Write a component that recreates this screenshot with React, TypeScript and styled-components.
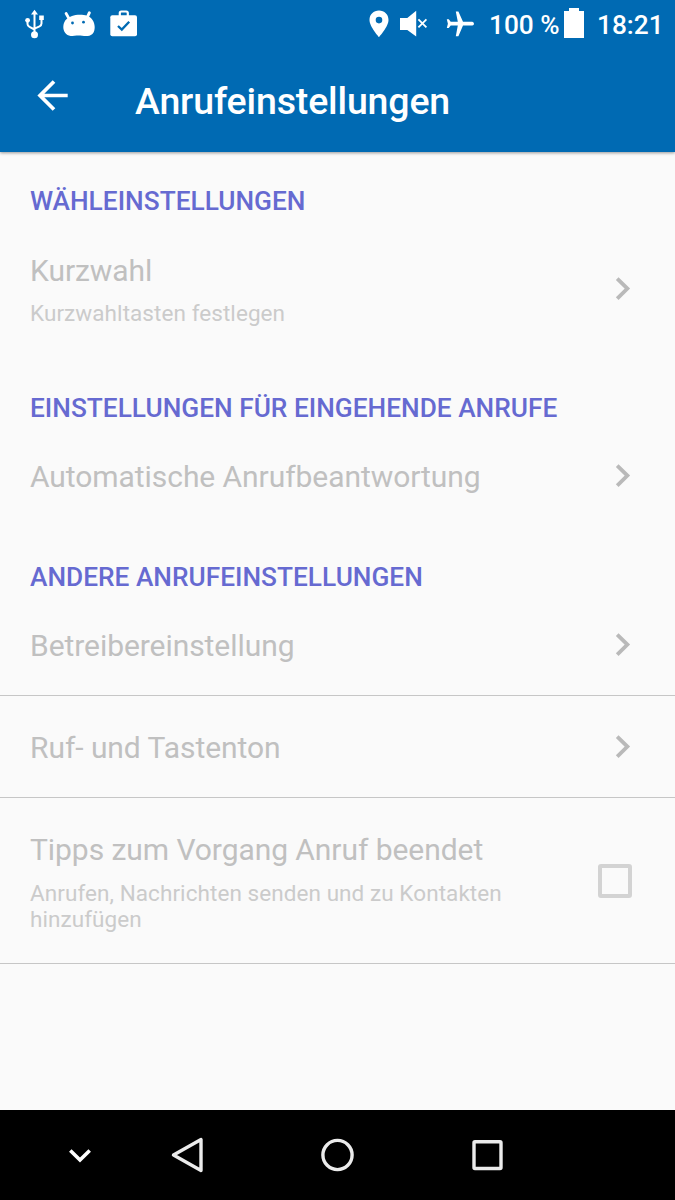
import React from "react";
import styled, { createGlobalStyle } from "styled-components";

const GlobalStyle = createGlobalStyle`
  * { box-sizing: border-box; }
  body { margin: 0; background: #fafafa; font-family: Roboto, "Liberation Sans", sans-serif; }
`;

const Screen = styled.div`
  width: 675px;
  height: 1200px;
  display: flex;
  flex-direction: column;
  background: #fafafa;
  overflow: hidden;
`;

const Header = styled.header`
  flex: none;
  height: 152px;
  background: #006ab3;
  color: #fff;
  box-shadow: 0 1px 3px rgba(0, 0, 0, 0.4);
`;

const StatusBar = styled.div`
  display: flex;
  justify-content: space-between;
  height: 45px;
  padding: 2px 12px 0 22px;
`;

const StatusGroup = styled.div`
  display: flex;
  align-items: center;
`;

const StatusItem = styled.div<{ $gap?: number; $raise?: number }>`
  flex: none;
  margin-left: ${(p) => p.$gap ?? 0}px;
  margin-bottom: ${(p) => p.$raise ?? 0}px;
`;

const StatusText = styled.span<{ $width: number; $gap: number }>`
  width: ${(p) => p.$width}px;
  margin-left: ${(p) => p.$gap}px;
  padding-top: 3px;
  font-size: 26.25px;
  line-height: 31px;
  font-weight: 500;
  white-space: nowrap;
`;

const Icon = styled.svg`
  display: block;
  flex: none;
`;

const Toolbar = styled.div`
  display: flex;
  height: 107px;
  padding: 34px 0 0 36px;
`;

const Title = styled.h1`
  margin: 0 0 0 65px;
  font-size: 37.5px;
  line-height: 44px;
  font-weight: 500;
  letter-spacing: -0.15px;
  white-space: nowrap;
`;

const Content = styled.main`
  flex: 1;
`;

const Category = styled.h2<{ $top?: number }>`
  margin: 0;
  height: 67px;
  padding: ${(p) => p.$top ?? 35}px 30px 0;
  color: #666ad1;
  font-size: 26.25px;
  line-height: 31px;
  font-weight: 500;
  letter-spacing: 0.01px;
  white-space: nowrap;
`;

const Row = styled.div<{ $height: number; $divided?: boolean }>`
  display: flex;
  align-items: center;
  justify-content: space-between;
  height: ${(p) => p.$height}px;
  padding: 0 43px 0 30px;
  border-bottom: ${(p) => (p.$divided ? "1px solid #c6c6c6" : "0")};
`;

const RowText = styled.div`
  align-self: flex-start;
  width: 500px;
  padding-top: 34px;
`;

const RowTitle = styled.div`
  color: #c0c0c0;
  font-size: 30px;
  line-height: 35px;
  letter-spacing: -0.06px;
  white-space: nowrap;
`;

const Summary = styled.div<{ $gap: number }>`
  margin-top: ${(p) => p.$gap}px;
  color: #cbcbcb;
  font-size: 22.5px;
  line-height: 26px;
  letter-spacing: 0.07px;
`;

const Checkbox = styled.span`
  width: 34px;
  height: 34px;
  border: 4px solid #d3d3d3;
  border-radius: 3px;
`;

const NavBar = styled.nav`
  flex: none;
  display: flex;
  align-items: center;
  height: 90px;
  padding-left: 60px;
  background: #000;
`;

const NavButton = styled.span<{ $gap?: number }>`
  width: 40px;
  height: 40px;
  margin-left: ${(p) => p.$gap ?? 0}px;
`;

const UsbIcon = () => (
  <Icon width="26" height="36" viewBox="0 0 26 36">
    <path
      d="M12.500 8v22M5.500 16v3q0 1.800 2 2.800l5 2.700M19.500 14v4.500q0 1.800-2 2.800l-5 2.300"
      fill="none"
      stroke="#fff"
      strokeWidth="2"
    />
    <path d="M12.500 4.700l3.500 4.800H9zM17.200 10.500h4.600v4.600h-4.600z" fill="#fff" />
    <circle cx="5.600" cy="15.300" r="2.400" fill="#fff" />
    <circle cx="12.500" cy="29.800" r="3.500" fill="#fff" />
  </Icon>
);

const AndroidIcon = () => (
  <Icon width="34" height="26" viewBox="0 0 34 26">
    <path d="M4.200 2.600l2.800 5M27.300 1.800l-2.300 5" stroke="#fff" strokeWidth="2.900" strokeLinecap="round" />
    <path
      d="M10 5C14 3.400 21 3.400 25 4.700 30 6.500 32.700 11 32.700 16c0 5-2 8.500-7 9-4 .4-7-.8-11-.4-4 .7-8 .8-10.500-1.600C1 20 .8 15.500 2 12 3.300 8.500 6 6.300 10 5z"
      fill="#fff"
    />
    <circle cx="10.500" cy="12" r="1.400" fill="#006ab3" />
    <circle cx="21.500" cy="11.200" r="1.400" fill="#006ab3" />
  </Icon>
);

const BriefcaseIcon = () => (
  <Icon width="28" height="28" viewBox="0 0 28 28">
    <path
      d="M9.800 6V3q0-1.500 1.500-1.500h5q1.500 0 1.500 1.500v3"
      fill="none"
      stroke="#fff"
      strokeWidth="2.200"
    />
    <rect x=".3" y="5.300" width="26.700" height="21" rx="2" fill="#fff" />
    <path d="M8 16l3.800 3.600 7.400-7.800" fill="none" stroke="#006ab3" strokeWidth="2.300" />
  </Icon>
);

const PinIcon = () => (
  <Icon width="20" height="28" viewBox="0 0 20 28">
    <path
      fillRule="evenodd"
      d="M10 .6C4.600.6.500 4.600.500 9.900.500 16.600 10 27 10 27s9.500-10.400 9.500-17.100C19.500 4.600 15.400.6 10 .6zm0 6.200a3.300 3.300 0 1 1 0 6.600 3.300 3.300 0 0 1 0-6.600z"
      fill="#fff"
    />
  </Icon>
);

const MuteIcon = () => (
  <Icon width="28" height="28" viewBox="0 0 28 28">
    <path d="M0 8h7.300L16.200.8v25.800L7.300 20H0z" fill="#fff" />
    <path d="M18.400 9.300l8 8M26.400 9.300l-8 8" stroke="#fff" strokeWidth="1.800" />
  </Icon>
);

const PlaneIcon = () => (
  <Icon width="28" height="28" viewBox="0 0 28 28">
    <path
      d="M26.300 11.800h-9.300L12.400 1.500H9.800l2 10.300H4.700L2.800 9.300H.8l1.100 4.400L.8 18.100h2l1.900-2.500h7.100l-2 10.600h2.600L17 15.600h9.300q1.700-.4 1.700-1.900t-1.700-1.900z"
      fill="#fff"
    />
  </Icon>
);

const BatteryIcon = () => (
  <Icon width="20" height="30" viewBox="0 0 20 30">
    <path d="M5 0h10v3h5v27H0V3h5z" fill="#fff" />
  </Icon>
);

const Chevron = () => (
  <Icon width="18" height="26" viewBox="0 0 18 26">
    <path d="M3.200 2.600l10.200 10-10.200 10" fill="none" stroke="#b9b9b9" strokeWidth="3.800" />
  </Icon>
);

export default function App() {
  return (
    <Screen>
      <GlobalStyle />
      <Header>
        <StatusBar>
          <StatusGroup>
            <StatusItem $raise={2}>
              <UsbIcon />
            </StatusItem>
            <StatusItem $gap={14}>
              <AndroidIcon />
            </StatusItem>
            <StatusItem $gap={14}>
              <BriefcaseIcon />
            </StatusItem>
          </StatusGroup>
          <StatusGroup>
            <StatusItem>
              <PinIcon />
            </StatusItem>
            <StatusItem $gap={11}>
              <MuteIcon />
            </StatusItem>
            <StatusItem $gap={18}>
              <PlaneIcon />
            </StatusItem>
            <StatusText $width={75} $gap={15}>100 %</StatusText>
            <StatusItem $raise={2}>
              <BatteryIcon />
            </StatusItem>
            <StatusText $width={66} $gap={13}>18:21</StatusText>
          </StatusGroup>
        </StatusBar>
        <Toolbar>
          <Icon width="34" height="34" viewBox="0 0 34 34">
            <path d="M31.700 16.500H4M18 2.500l-14 14 14 14" fill="none" stroke="#fff" strokeWidth="3.700" />
          </Icon>
          <Title>Anrufeinstellungen</Title>
        </Toolbar>
      </Header>
      <Content>
        <Category $top={34}>WÄHLEINSTELLUNGEN</Category>
        <Row $height={139}>
          <RowText>
            <RowTitle>Kurzwahl</RowTitle>
            <Summary $gap={12}>Kurzwahltasten festlegen</Summary>
          </RowText>
          <Chevron />
        </Row>
        <Category>EINSTELLUNGEN FÜR EINGEHENDE ANRUFE</Category>
        <Row $height={102}>
          <RowText>
            <RowTitle>Automatische Anrufbeantwortung</RowTitle>
          </RowText>
          <Chevron />
        </Row>
        <Category>ANDERE ANRUFEINSTELLUNGEN</Category>
        <Row $height={102} $divided>
          <RowText>
            <RowTitle>Betreibereinstellung</RowTitle>
          </RowText>
          <Chevron />
        </Row>
        <Row $height={102} $divided>
          <RowText>
            <RowTitle>Ruf- und Tastenton</RowTitle>
          </RowText>
          <Chevron />
        </Row>
        <Row $height={166} $divided>
          <RowText>
            <RowTitle>Tipps zum Vorgang Anruf beendet</RowTitle>
            <Summary $gap={13}>Anrufen, Nachrichten senden und zu Kontakten hinzufügen</Summary>
          </RowText>
          <Checkbox />
        </Row>
      </Content>
      <NavBar>
        <NavButton>
          <Icon width="40" height="40" viewBox="0 0 40 40">
            <path d="M10.300 15.500l9.700 9.500 9.700-9.500" fill="none" stroke="#fff" strokeWidth="3.600" />
          </Icon>
        </NavButton>
        <NavButton $gap={67}>
          <Icon width="40" height="40" viewBox="0 0 40 40">
            <path d="M34 4.500v31L6.500 20z" fill="none" stroke="#ebebeb" strokeWidth="3.400" strokeLinejoin="round" />
          </Icon>
        </NavButton>
        <NavButton $gap={110}>
          <Icon width="40" height="40" viewBox="0 0 40 40">
            <circle cx="20.500" cy="20" r="14.600" fill="none" stroke="#ebebeb" strokeWidth="3.400" />
          </Icon>
        </NavButton>
        <NavButton $gap={110}>
          <Icon width="40" height="40" viewBox="0 0 40 40">
            <rect x="7" y="6.700" width="27" height="26.800" rx="1" fill="none" stroke="#ebebeb" strokeWidth="3.400" />
          </Icon>
        </NavButton>
      </NavBar>
    </Screen>
  );
}
